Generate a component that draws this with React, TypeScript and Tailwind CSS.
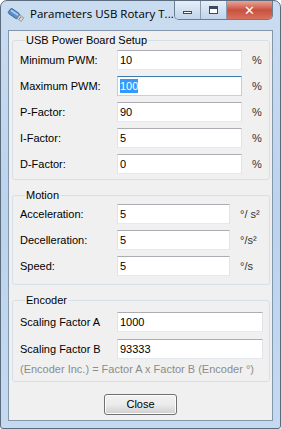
import React from 'react';

const body = { fontFamily: '"Liberation Sans", Arial, sans-serif' };

function Field({ value, width, focused }: { value: string; width: string; focused?: boolean }) {
  return (
    <div
      className={`h-[20px] ${width} flex items-center bg-white border ${
        focused
          ? 'border-t-[#3d7bad] border-x-[#b5cfe7] border-b-[#b7d5ee]'
          : 'border-t-[#abadb3] border-x-[#e2e3ea] border-b-[#e3e9ef]'
      } pl-[2px]`}
    >
      {focused ? (
        <span className="bg-[#3399ff] text-white leading-[14px] px-0">{value}</span>
      ) : (
        <span className="text-black leading-[14px]">{value}</span>
      )}
    </div>
  );
}

function Row({ label, value, unit, width, focused }: { label: string; value: string; unit?: string; width: string; focused?: boolean }) {
  return (
    <div className="flex items-center">
      <div className="w-[97px] text-black">{label}</div>
      <Field value={value} width={width} focused={focused} />
      {unit && <div className="ml-[10px] text-[#333]">{unit}</div>}
    </div>
  );
}

function Group({ title, className, children }: { title: string; className: string; children: React.ReactNode }) {
  return (
    <fieldset className={`border border-[#d5dfe5] rounded-[3px] pl-[7px] ${className}`}>
      <legend className="ml-[5px] px-[1px] leading-[14px] text-black">{title}</legend>
      {children}
    </fieldset>
  );
}

function UsbIcon() {
  return (
    <svg width="18" height="16" viewBox="0 0 18 16">
      <g transform="rotate(35 9 8)">
        <rect x="1" y="5" width="11" height="6" rx="1.5" fill="#5a8fc9" stroke="#2f5f96" strokeWidth="0.8" />
        <rect x="2" y="6" width="9" height="2" rx="1" fill="#a9cdf2" />
        <rect x="12" y="5.8" width="5" height="4.4" fill="#d8d8d8" stroke="#8a8a8a" strokeWidth="0.7" />
        <rect x="13.5" y="6.8" width="1.2" height="1" fill="#777" />
        <rect x="13.5" y="8.3" width="1.2" height="1" fill="#777" />
      </g>
    </svg>
  );
}

export default function App() {
  return (
    <div className="w-[281px] h-[429px] flex flex-col rounded-t-[7px] rounded-b-[3px] border border-[#5b6c7f] bg-gradient-to-b from-[#cadcf0] via-[#bcd3ec] to-[#c5daf0] overflow-hidden">
      <div className="h-[29px] flex items-start">
        <div className="mt-[6px] ml-[6px] shrink-0">
          <UsbIcon />
        </div>
        <div
          className="mt-[5px] ml-[5px] text-[11.5px] leading-[16px] text-black whitespace-nowrap"
          style={{ fontFamily: '"Open Sans", "Noto Sans", sans-serif' }}
        >
          Parameters USB Rotary T...
        </div>
        <div className="ml-auto mr-[7px] flex shrink-0 h-[19px] rounded-b-[5px] border border-t-0 border-[#6d7d90] overflow-hidden">
          <div className="w-[26px] flex items-center justify-center bg-gradient-to-b from-[#e6eef8] to-[#c1d4ea] border-r border-[#8a9bb0]">
            <div className="w-[9px] h-[3px] border border-[#3b4a5c] bg-white mt-[4px]" />
          </div>
          <div className="w-[26px] flex items-center justify-center bg-gradient-to-b from-[#e6eef8] to-[#c1d4ea] border-r border-[#8a9bb0]">
            <div className="w-[9px] h-[8px] border border-[#3b4a5c] border-t-[3px] bg-white" />
          </div>
          <div className="w-[45px] flex items-center justify-center bg-gradient-to-b from-[#e8a496] via-[#c9503f] to-[#d8715e]">
            <span className="text-white text-[13px] font-bold leading-none" style={{ fontFamily: '"DejaVu Sans", sans-serif' }}>
              ✕
            </span>
          </div>
        </div>
      </div>
      <div
        className="flex-1 mx-[7px] mb-[7px] border border-[#8397ac] bg-[#f0f0f0] pl-[3px] pr-[2px] pt-[2px] flex flex-col text-[11px]"
        style={body}
      >
        <Group title="USB Power Board Setup" className="pt-[3px] pb-[5px]">
          <div className="flex flex-col gap-[6px]">
            <Row label="Minimum PWM:" value="10" unit="%" width="w-[125px]" />
            <Row label="Maximum PWM:" value="100" unit="%" width="w-[125px]" focused />
            <Row label="P-Factor:" value="90" unit="%" width="w-[125px]" />
            <Row label="I-Factor:" value="5" unit="%" width="w-[125px]" />
            <Row label="D-Factor:" value="0" unit="%" width="w-[125px]" />
          </div>
        </Group>
        <Group title="Motion" className="mt-[8px] pt-[2px] pb-[8px]">
          <div className="flex flex-col gap-[6px]">
            <Row label="Acceleration:" value="5" unit="°/ s²" width="w-[113px]" />
            <Row label="Decelleration:" value="5" unit="°/s²" width="w-[113px]" />
            <Row label="Speed:" value="5" unit="°/s" width="w-[113px]" />
          </div>
        </Group>
        <Group title="Encoder" className="mt-[8px] pt-[5px] pb-[5px]">
          <div className="flex flex-col gap-[7px]">
            <Row label="Scaling Factor A" value="1000" width="w-[146px]" />
            <Row label="Scaling Factor B" value="93333" width="w-[146px]" />
          </div>
          <div className="mt-[3px] leading-[14px] text-[#8c8c8c]">(Encoder Inc.) = Factor A x Factor B (Encoder °)</div>
        </Group>
        <div className="mt-[12px] flex justify-center pr-[1px]">
          <button className="w-[73px] h-[21px] rounded-[3px] border border-[#707070] bg-gradient-to-b from-[#f2f2f2] via-[#ebebeb] to-[#cfcfcf] text-black text-[11px] shadow-[inset_0_0_0_1px_#fcfcfc]">
            Close
          </button>
        </div>
      </div>
    </div>
  );
}
